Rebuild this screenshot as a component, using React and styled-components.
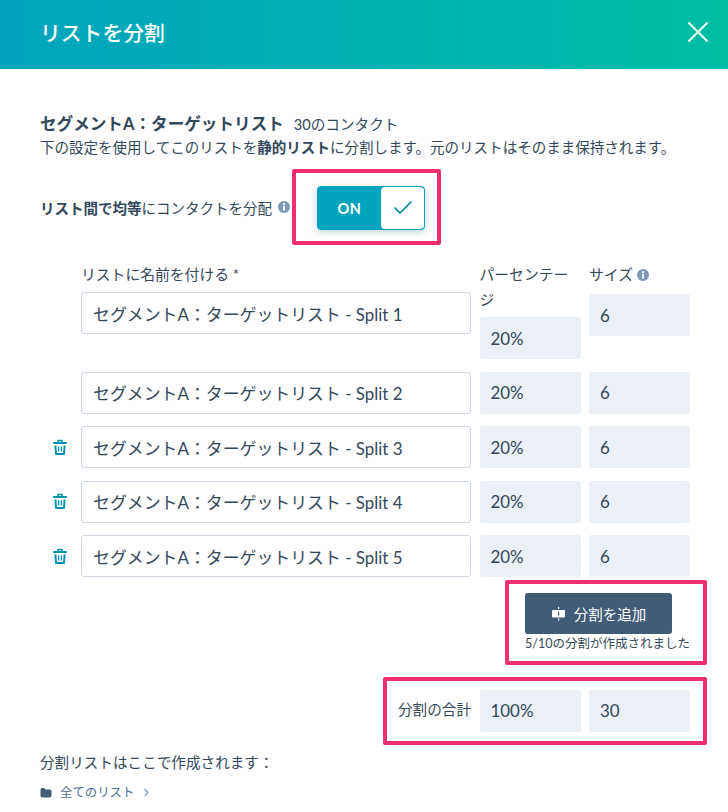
import React from "react";
import styled, { createGlobalStyle } from "styled-components";
import { X, Check, Folder, ChevronRight } from "lucide-react";

const FONT = `Lato, "Noto Sans CJK JP", sans-serif`;

const Global = createGlobalStyle`
  html, body { margin: 0; padding: 0; background: #fff; }
  body { font-family: ${FONT}; color: #33475b; overflow: hidden; }
  * { box-sizing: border-box; }
`;

const Page = styled.div`
  width: 728px;
  height: 812px;
  overflow: hidden;
`;

const Header = styled.header`
  height: 69px;
  padding: 0 12px 5px 40px;
  display: flex;
  align-items: center;
  justify-content: space-between;
  background: linear-gradient(90deg, #00a4bd 0%, #00bda5 100%);
  color: #fff;
`;

const Title = styled.h1`
  margin: 0;
  font-size: 20.8px;
  font-weight: 500;
`;

const Body = styled.main`
  padding: 43px 38px 0 40px;
`;

const Heading = styled.div`
  display: flex;
  align-items: baseline;
  gap: 10px;
  height: 24px;
  line-height: 24px;
`;

const ListName = styled.strong`
  font-size: 16.6px;
  font-weight: 700;
`;

const Count = styled.span`
  font-size: 14.6px;
`;

const Description = styled.p`
  margin: 0;
  font-size: 14.53px;
  line-height: 24px;
  white-space: nowrap;
  b { font-weight: 700; }
`;

const ToggleRow = styled.div`
  display: flex;
  align-items: center;
  margin-top: 9px;
  height: 76px;
  font-size: 14.5px;
`;

const InfoIcon = styled.svg`
  width: 12px;
  height: 12px;
  margin-left: ${(p) => p.$gap || 6}px;
  flex: none;
  vertical-align: -1px;
`;

const Highlight = styled.div`
  border: 4px solid #ee2f6f;
  border-radius: 2px;
  background: #fff;
`;

const ToggleBox = styled(Highlight)`
  width: 149px;
  height: 76px;
  margin-left: 2px;
  padding: 13px 0 0 21px;
`;

const Toggle = styled.div`
  width: 108px;
  height: 44px;
  display: flex;
  background: #00a4bd;
  border: 1px solid #00a4bd;
  border-radius: 4px;
  box-shadow: 0 2px 6px rgba(0, 80, 100, 0.25);
`;

const ToggleLabel = styled.span`
  flex: 1;
  display: flex;
  align-items: center;
  justify-content: center;
  color: #fff;
  font-size: 14.5px;
  font-weight: 700;
  letter-spacing: 0.5px;
`;

const ToggleKnob = styled.span`
  width: 43px;
  display: flex;
  align-items: center;
  justify-content: center;
  background: #fff;
  border-radius: 4px;
  color: #00869b;
`;

const SplitGrid = styled.div`
  margin-top: 17px;
  display: flex;
  flex-direction: column;
  gap: 12.5px;
`;

const Row = styled.div`
  display: grid;
  grid-template-columns: 32.5px 390px 101px 101px;
  column-gap: 8.5px;
  align-items: ${(p) => (p.$head ? "start" : "center")};
`;

const Label = styled.label`
  display: block;
  font-size: 14.8px;
  line-height: 25px;
  color: #33475b;
`;

const Cell = styled.div`
  display: flex;
  flex-direction: column;
  gap: ${(p) => p.$gap || 5}px;
`;

const NameInput = styled.div`
  height: 42px;
  padding: 0 11px;
  display: flex;
  align-items: center;
  border: 1px solid #cbd6e2;
  border-radius: 3px;
  font-size: 16.9px;
  white-space: nowrap;
  color: #33475b;
  background: #fff;
`;

const ReadOnly = styled.div`
  height: 42px;
  padding: 0 11px;
  display: flex;
  align-items: center;
  border-radius: 3px;
  font-size: 16.9px;
  color: #33475b;
  background: #eaf0f6;
`;

const TrashButton = styled.span`
  display: flex;
  justify-content: center;
  padding-left: 8px;
  color: #0091ae;
`;

const AddArea = styled(Highlight)`
  width: 202px;
  height: 85px;
  margin: 2.5px 0 0 465px;
  padding: 9px 0 0 16px;
`;

const AddButton = styled.button`
  width: 147px;
  height: 41px;
  display: flex;
  align-items: center;
  justify-content: center;
  gap: 8px;
  border: 0;
  border-radius: 3px;
  background: #425b76;
  color: #fff;
  font-family: inherit;
  font-size: 14.5px;
`;

const AddHint = styled.div`
  margin-top: 1px;
  font-size: 12.5px;
  line-height: 18px;
  white-space: nowrap;
`;

const TotalArea = styled(Highlight)`
  width: 324px;
  height: 68px;
  margin: 12px 0 0 343px;
  padding-left: 11px;
  display: flex;
  align-items: center;
  gap: 8.5px;
`;

const TotalLabel = styled.span`
  width: 73px;
  font-size: 14.6px;
  white-space: nowrap;
  margin-top: -4px;
`;

const TotalValue = styled(ReadOnly)`
  width: 101px;
`;

const Location = styled.div`
  margin-top: 6px;
  font-size: 14.6px;
  line-height: 24px;
`;

const Breadcrumb = styled.div`
  display: flex;
  align-items: center;
  margin-top: 9px;
  font-size: 12.4px;
  line-height: 18px;
  color: #516f90;
  svg:first-child { margin-right: 8px; color: #425b76; }
  svg:last-child { margin-left: 6px; color: #7c98b6; }
`;

const splits = [
  { id: 1, removable: false },
  { id: 2, removable: false },
  { id: 3, removable: true },
  { id: 4, removable: true },
  { id: 5, removable: true },
];

const listName = (id) => `セグメントA：ターゲットリスト - Split ${id}`;

function Info({ gap }) {
  return (
    <InfoIcon viewBox="0 0 12 12" $gap={gap}>
      <circle cx="6" cy="6" r="6" fill="#7c98b6" />
      <rect x="5" y="5" width="2" height="4.5" fill="#fff" />
      <circle cx="6" cy="3.2" r="1.1" fill="#fff" />
    </InfoIcon>
  );
}

function TrashIcon() {
  return (
    <svg width="14" height="17" viewBox="0 0 14 17" fill="none" stroke="currentColor">
      <path d="M1 4h12" strokeWidth="2" strokeLinecap="round" />
      <path d="M5 3V1.6h4V3" strokeWidth="1.5" />
      <path d="M2.4 6.5 3 15h8l.6-8.5" strokeWidth="2" strokeLinejoin="round" />
      <path d="M5.6 7.5v5M8.4 7.5v5" strokeWidth="1.3" />
    </svg>
  );
}

function SplitIcon() {
  return (
    <svg width="15" height="15" viewBox="0 0 15 15" fill="#fff">
      <rect x="1" y="4" width="13" height="7.5" rx="1" />
      <rect x="7" y="1" width="1.2" height="2" />
      <rect x="7" y="12.5" width="1.2" height="2" />
      <rect x="7" y="6" width="1.2" height="3.5" fill="#425b76" />
    </svg>
  );
}

export default function App() {
  return (
    <Page>
      <Global />
      <Header>
        <Title>リストを分割</Title>
        <X size={36} strokeWidth={1.3} />
      </Header>
      <Body>
        <Heading>
          <ListName>セグメントA：ターゲットリスト</ListName>
          <Count>30のコンタクト</Count>
        </Heading>
        <Description>
          下の設定を使用してこのリストを<b>静的リスト</b>
          に分割します。元のリストはそのまま保持されます。
        </Description>
        <ToggleRow>
          <span>
            <b>リスト間で均等</b>にコンタクトを分配
          </span>
          <Info />
          <ToggleBox>
            <Toggle>
              <ToggleLabel>ON</ToggleLabel>
              <ToggleKnob>
                <Check size={24} strokeWidth={1.7} />
              </ToggleKnob>
            </Toggle>
          </ToggleBox>
        </ToggleRow>
        <SplitGrid>
          {splits.map((split, i) =>
            i === 0 ? (
              <Row key={split.id} $head>
                <span />
                <Cell>
                  <Label>リストに名前を付ける *</Label>
                  <NameInput>{listName(split.id)}</NameInput>
                </Cell>
                <Cell>
                  <Label>パーセンテージ</Label>
                  <ReadOnly>20%</ReadOnly>
                </Cell>
                <Cell $gap={7}>
                  <Label>
                    サイズ
                    <Info gap={4} />
                  </Label>
                  <ReadOnly>6</ReadOnly>
                </Cell>
              </Row>
            ) : (
              <Row key={split.id}>
                <TrashButton>{split.removable && <TrashIcon />}</TrashButton>
                <NameInput>{listName(split.id)}</NameInput>
                <ReadOnly>20%</ReadOnly>
                <ReadOnly>6</ReadOnly>
              </Row>
            )
          )}
        </SplitGrid>
        <AddArea>
          <AddButton>
            <SplitIcon />
            分割を追加
          </AddButton>
          <AddHint>5/10の分割が作成されました</AddHint>
        </AddArea>
        <TotalArea>
          <TotalLabel>分割の合計</TotalLabel>
          <TotalValue>100%</TotalValue>
          <TotalValue>30</TotalValue>
        </TotalArea>
        <Location>分割リストはここで作成されます：</Location>
        <Breadcrumb>
          <Folder size={12} fill="#425b76" />
          全てのリスト
          <ChevronRight size={13} />
        </Breadcrumb>
      </Body>
    </Page>
  );
}
